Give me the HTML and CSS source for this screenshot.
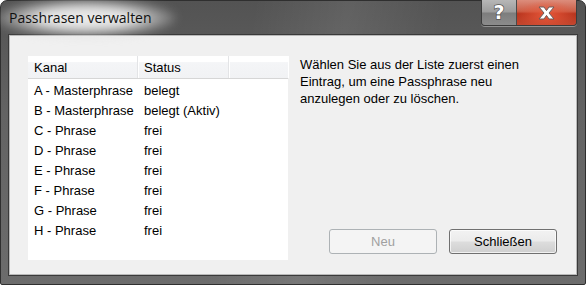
FILE: index.html
```html
<!DOCTYPE html>
<html lang="de">
<head>
    <meta charset="UTF-8">
    <title>Passhrasen verwalten</title>
    <link rel="stylesheet" href="styles.css">
</head>
<body>
    <div class="window">
        <div class="titlebar">
            <span class="title">Passhrasen verwalten</span>
            <div class="caption-buttons">
                <div class="cap-btn help"><span class="help-glyph">?</span></div>
                <div class="cap-btn close">
                    <svg width="17" height="14" viewBox="-1 -1 17 14">
                        <path d="M0,0 H5 L7.5,3.6 L10,0 H15 L10,6 L15,12 H10 L7.5,8.4 L5,12 H0 L5,6 Z" fill="#fff" stroke="#6b5a58" stroke-width="1"/>
                    </svg>
                </div>
            </div>
        </div>

        <div class="client">
            <div class="list">
                <div class="list-head">
                    <div class="head-col col-kanal">Kanal</div>
                    <div class="head-col col-status">Status</div>
                    <div class="head-col col-rest"></div>
                </div>
                <div class="rows">
                    <div class="row"><span class="col-kanal">A - Masterphrase</span><span class="col-status">belegt</span></div>
                    <div class="row"><span class="col-kanal">B - Masterphrase</span><span class="col-status">belegt (Aktiv)</span></div>
                    <div class="row"><span class="col-kanal">C - Phrase</span><span class="col-status">frei</span></div>
                    <div class="row"><span class="col-kanal">D - Phrase</span><span class="col-status">frei</span></div>
                    <div class="row"><span class="col-kanal">E - Phrase</span><span class="col-status">frei</span></div>
                    <div class="row"><span class="col-kanal">F - Phrase</span><span class="col-status">frei</span></div>
                    <div class="row"><span class="col-kanal">G - Phrase</span><span class="col-status">frei</span></div>
                    <div class="row"><span class="col-kanal">H - Phrase</span><span class="col-status">frei</span></div>
                </div>
            </div>

            <div class="side">
                <p class="hint">Wählen Sie aus der Liste zuerst einen Eintrag, um eine Passphrase neu anzulegen oder zu löschen.</p>
                <div class="buttons">
                    <button class="btn" disabled>Neu</button>
                    <button class="btn">Schließen</button>
                </div>
            </div>
        </div>
    </div>
</body>
</html>
```

FILE: styles.css
```css
* {
    margin: 0;
    padding: 0;
    box-sizing: border-box;
}

body {
    width: 586px;
    height: 285px;
    overflow: hidden;
    font-family: "Liberation Sans", Arial, sans-serif;
    font-size: 13px;
    color: #000;
}

.window {
    width: 586px;
    height: 285px;
    border: 1px solid #2f2f2f;
    border-radius: 7px 7px 2px 2px;
    background:
        linear-gradient(100deg, transparent 40%, rgba(255, 255, 255, 0.08) 55%, transparent 70%),
        linear-gradient(to bottom, #535353 0%, #636363 40%, #6c6c6c 100%);
    display: flex;
    flex-direction: column;
    padding: 0 7px 8px 7px;
}

.titlebar {
    height: 33px;
    display: flex;
    justify-content: space-between;
    align-items: flex-start;
    position: relative;
}

/* glow behind the caption text */
.titlebar::before {
    content: "";
    position: absolute;
    left: -12px;
    top: -2px;
    width: 180px;
    height: 38px;
    border-radius: 50%;
    background: radial-gradient(ellipse at center, rgba(240, 240, 240, 0.95) 35%, rgba(210, 210, 210, 0.45) 60%, transparent 78%);
    filter: blur(5px);
}

.title {
    position: relative;
    margin-top: 7px;
    margin-left: 1px;
    font-family: "Open Sans", "Noto Sans", sans-serif;
    font-size: 14px;
    color: #111;
}

.caption-buttons {
    display: flex;
    margin-top: -1px;
    margin-right: 1px;
    border: 1px solid #3c3c3c;
    border-top: none;
    border-radius: 0 0 4px 4px;
    overflow: hidden;
    box-shadow: 0 1px 0 rgba(255, 255, 255, 0.35);
}

.cap-btn {
    height: 25px;
    display: flex;
    align-items: center;
    justify-content: center;
}

.help {
    width: 35px;
    background: linear-gradient(to bottom, #b7b7b7 0%, #9c9c9c 48%, #7d7d7d 52%, #8c8c8c 100%);
    border-right: 1px solid #4a4a4a;
}

.help-glyph {
    font-family: "DejaVu Sans", sans-serif;
    font-weight: bold;
    font-size: 19px;
    line-height: 1;
    color: #fff;
    -webkit-text-stroke: 1.4px #555;
    paint-order: stroke fill;
}

.close {
    width: 59px;
    background:
        radial-gradient(ellipse at 50% 60%, rgba(235, 90, 60, 0.9) 0%, transparent 70%),
        linear-gradient(to bottom, #dc8d7c 0%, #cb5e47 45%, #b8341d 55%, #c4472f 100%);
}

.client {
    flex: 1;
    background: #f0f0f0;
    border: 1px solid #3a3a3a;
    box-shadow: inset 0 0 0 1px #b9b9b9;
    display: flex;
    padding: 21px 20px 15px 19px;
}

.list {
    width: 260px;
    background: #fff;
}

.list-head {
    height: 23px;
    display: flex;
    background: linear-gradient(to bottom, #fff 0%, #fff 25%, #f4f5f7 30%, #f1f2f4 100%);
    border-bottom: 1px solid #d6d6d6;
}

.head-col {
    height: 22px;
    line-height: 23px;
    padding-left: 6px;
    border-right: 1px solid #e3e4e6;
    box-shadow: 1px 0 0 #fff;
}

.col-kanal {
    width: 110px;
    display: inline-block;
    padding-left: 6px;
}

.col-status {
    width: 91px;
    display: inline-block;
    padding-left: 6px;
}

.col-rest {
    flex: 1;
    border-right: none;
}

.rows {
    padding-top: 2px;
}

.row {
    height: 20px;
    line-height: 20px;
    white-space: nowrap;
}

.side {
    flex: 1;
    display: flex;
    flex-direction: column;
    padding-left: 12px;
    padding-bottom: 6px;
}

.hint {
    line-height: 17px;
    width: 240px;
}

.buttons {
    margin-top: auto;
    display: flex;
    justify-content: flex-end;
    gap: 12px;
}

.btn {
    width: 108px;
    height: 25px;
    font-family: "Liberation Sans", Arial, sans-serif;
    font-size: 13px;
    color: #000;
    border: 1px solid #707070;
    border-radius: 3px;
    background: linear-gradient(to bottom, #f2f2f2 0%, #ebebeb 49%, #dddddd 51%, #cfcfcf 100%);
    box-shadow: inset 0 0 0 1px rgba(255, 255, 255, 0.7);
}

.btn:disabled {
    color: #a0a0a0;
    border-color: #adb2b5;
    background: #f4f4f4;
    box-shadow: none;
}
```
